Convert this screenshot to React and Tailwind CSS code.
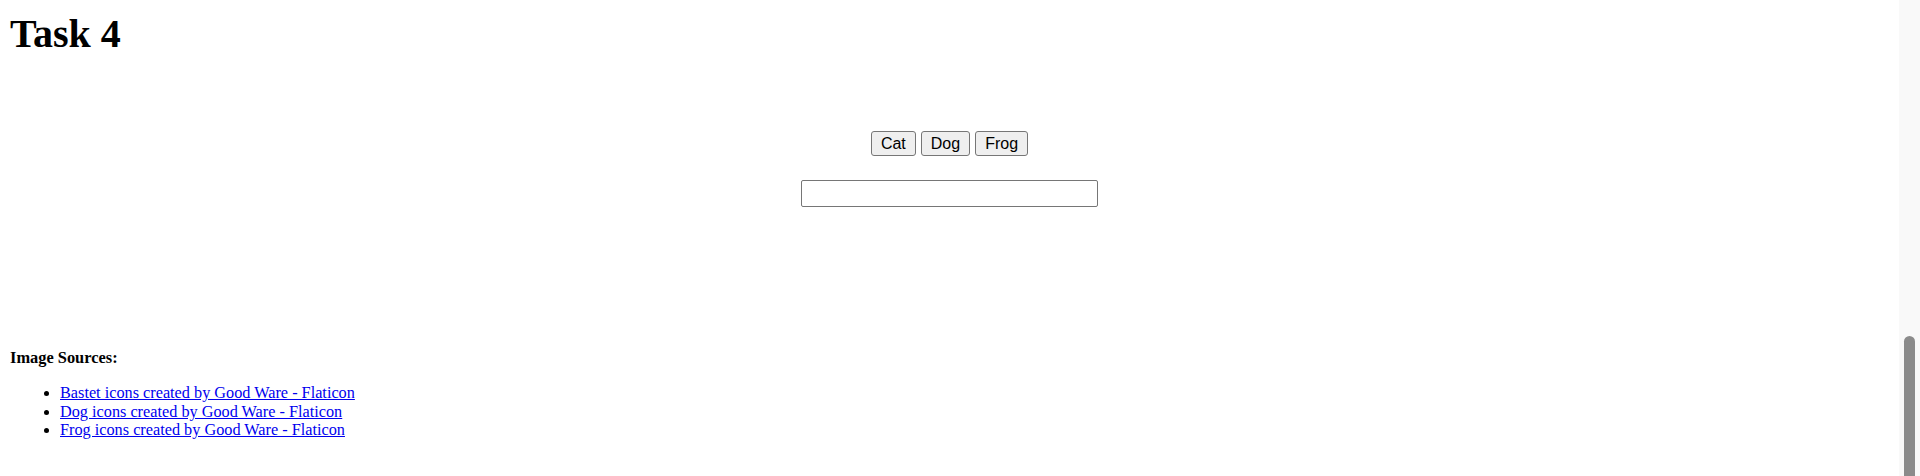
export default function App() {
  const links = [
    "Bastet icons created by Good Ware - Flaticon",
    "Dog icons created by Good Ware - Flaticon",
    "Frog icons created by Good Ware - Flaticon",
  ];
  return (
    <div className="flex h-[476px] w-[1920px] overflow-hidden bg-white text-black" style={{ fontFamily: '"Liberation Serif", serif' }}>
      <div className="flex w-[1899px] flex-col">
        <h1 className="ml-[10px] mt-[13px] text-[40px] font-bold leading-[42px]">Task 4</h1>
        <div className="mt-[76px] flex justify-center gap-[5px]" style={{ fontFamily: '"Liberation Sans", Arial, sans-serif' }}>
          {["Cat", "Dog", "Frog"].map((t) => (
            <button
              key={t}
              className="h-[25px] rounded-[3px] border border-[#767676] bg-[#efefef] px-[9px] text-[16px] leading-[23px] text-black"
            >
              {t}
            </button>
          ))}
        </div>
        <div className="mt-[24px] flex justify-center">
          <input type="text" className="h-[27px] w-[297px] rounded-[2px] border border-[#767676] bg-white" />
        </div>
        <h5 className="ml-[10px] mt-[142px] text-[16.4px] font-bold leading-[18px]">Image Sources:</h5>
        <ul className="ml-[10px] mt-[17px] list-disc pl-[50px] text-[16.25px] leading-[18.67px]">
          {links.map((l) => (
            <li key={l}>
              <a href="#" className="text-[#0000ee] underline">{l}</a>
            </li>
          ))}
        </ul>
      </div>
      <div className="flex w-[21px] flex-col justify-end bg-[#f9f9f9] pl-[5px] pr-[5px]">
        <div className="h-[140px] w-[11px] rounded-t-full bg-[#8b8b8b]"></div>
      </div>
    </div>
  );
}
